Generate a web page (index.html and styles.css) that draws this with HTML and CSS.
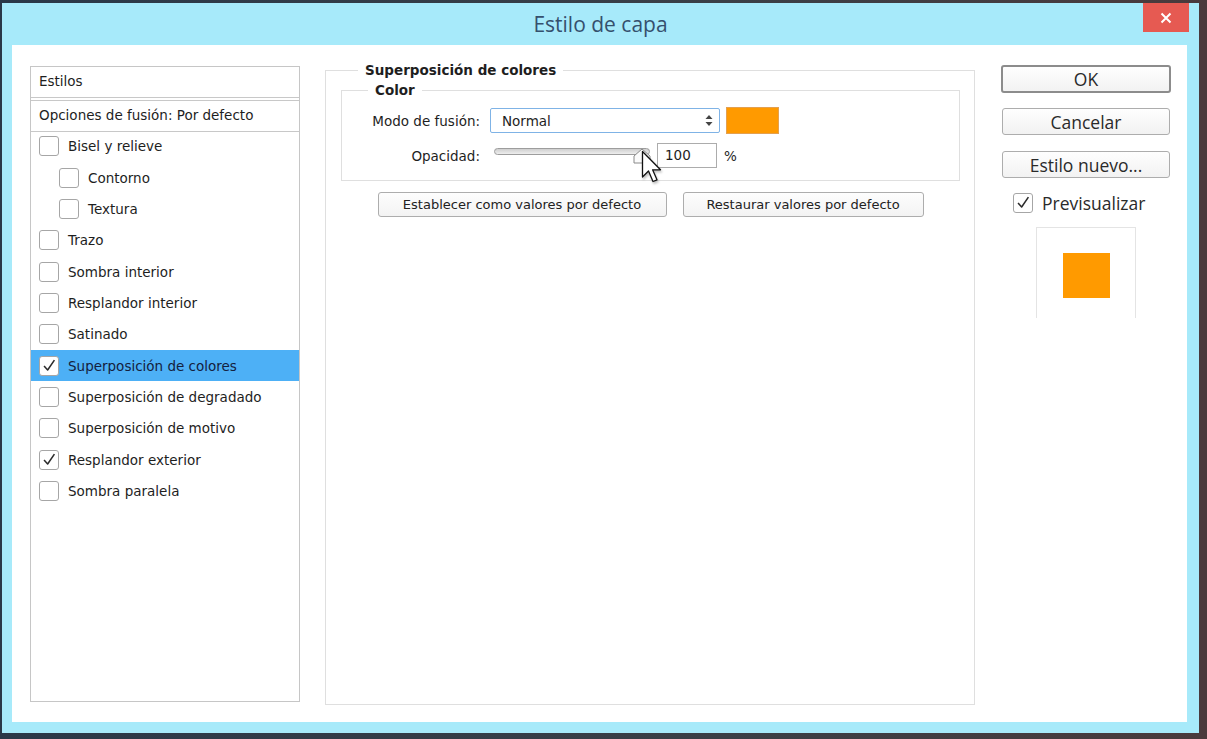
FILE: index.html
```html
<!DOCTYPE html>
<html lang="es">
<head>
<meta charset="utf-8">
<title>Estilo de capa</title>
<link rel="stylesheet" href="styles.css">
</head>
<body>
<div class="window">
  <div class="titlebar">
    <div class="tb-spacer"></div>
    <div class="title">Estilo de capa</div>
    <div class="tb-right">
      <div class="close">
        <svg width="12" height="12" viewBox="0 0 12 12"><path d="M1.5 1.5 L10.5 10.5 M10.5 1.5 L1.5 10.5" stroke="#fff" stroke-width="2" fill="none"/></svg>
      </div>
    </div>
  </div>
  <div class="client">
    <div class="styles-panel">
      <div class="panel-head">Estilos</div>
      <div class="panel-head second">Opciones de fusión: Por defecto</div>
      <ul class="fx-list">
        <li class="fx"><span class="cb"></span>Bisel y relieve</li>
        <li class="fx sub"><span class="cb"></span>Contorno</li>
        <li class="fx sub"><span class="cb"></span>Textura</li>
        <li class="fx"><span class="cb"></span>Trazo</li>
        <li class="fx"><span class="cb"></span>Sombra interior</li>
        <li class="fx"><span class="cb"></span>Resplandor interior</li>
        <li class="fx"><span class="cb"></span>Satinado</li>
        <li class="fx selected"><span class="cb"><svg viewBox="0 0 20 20"><path d="M4.5 10 L8.5 14.5 L16 3.5" /></svg></span>Superposición de colores</li>
        <li class="fx"><span class="cb"></span>Superposición de degradado</li>
        <li class="fx"><span class="cb"></span>Superposición de motivo</li>
        <li class="fx"><span class="cb"><svg viewBox="0 0 20 20"><path d="M4.5 10 L8.5 14.5 L16 3.5" /></svg></span>Resplandor exterior</li>
        <li class="fx"><span class="cb"></span>Sombra paralela</li>
      </ul>
    </div>

    <fieldset class="group outer">
      <legend>Superposición de colores</legend>
      <fieldset class="group inner">
        <legend>Color</legend>
        <div class="row r1">
          <span class="lbl">Modo de fusión:</span>
          <div class="select">
            <span>Normal</span>
            <svg class="updown" width="8" height="13" viewBox="0 0 8 13"><path d="M4 1 L7.5 5 L0.5 5 Z M4 12 L7.5 8 L0.5 8 Z" fill="#444"/></svg>
          </div>
          <div class="swatch"></div>
        </div>
        <div class="row r2">
          <span class="lbl">Opacidad:</span>
          <div class="slider">
            <div class="track"></div>
            <svg class="thumb" width="18" height="16" viewBox="0 0 18 16"><path d="M9 1 L17 8 L17 15 L1 15 L1 8 Z" fill="#fbfbfb" stroke="#8a8a8a" stroke-width="1"/></svg>
          </div>
          <div class="num">100</div>
          <span class="pct">%</span>
        </div>
      </fieldset>
      <div class="btnrow">
        <button class="btn b1">Establecer como valores por defecto</button>
        <button class="btn b2">Restaurar valores por defecto</button>
      </div>
    </fieldset>

    <div class="side">
      <button class="sbtn ok">OK</button>
      <button class="sbtn">Cancelar</button>
      <button class="sbtn">Estilo nuevo...</button>
      <div class="preview-check">
        <span class="cb"><svg viewBox="0 0 20 20"><path d="M4.5 10 L8.5 14.5 L16 3.5" /></svg></span>
        <span>Previsualizar</span>
      </div>
      <div class="preview">
        <div class="preview-square"></div>
      </div>
    </div>
  </div>
</div>
<svg class="cursor" width="22" height="36" viewBox="0 0 22 36"><path d="M1.5 1.5 L1.5 27 L7.5 21 L12 31.5 L16 29.8 L11.6 19.8 L19.5 19.8 Z" fill="#fff" stroke="#111" stroke-width="1.3" stroke-linejoin="round"/></svg>
</body>
</html>
```

FILE: styles.css
```css
* { box-sizing: border-box; }

html, body {
  margin: 0;
  padding: 0;
}

body {
  width: 1207px;
  height: 739px;
  overflow: hidden;
  position: relative;
  background: linear-gradient(90deg, #2a3848 0%, #3a3f46 60%, #4a3a3c 100%);
  font-family: "DejaVu Sans", Verdana, sans-serif;
  color: #1e1e1e;
}

.window {
  margin: 3px 0 0 2px;
  width: 1197px;
  height: 730px;
  background: #a7eafa;
  display: flex;
  flex-direction: column;
}

.titlebar {
  height: 42px;
  display: grid;
  grid-template-columns: 1fr auto 1fr;
  align-items: start;
}

.title {
  font-family: "Open Sans", "Segoe UI", sans-serif;
  font-size: 21px;
  line-height: 42px;
  color: #35506d;
}

.tb-right {
  display: flex;
  justify-content: flex-end;
}

.close {
  width: 46px;
  height: 29px;
  margin-right: 10px;
  background: #e65a52;
  display: flex;
  align-items: center;
  justify-content: center;
}

.client {
  margin: 0 12px 11px 10px;
  height: 677px;
  background: #ffffff;
  display: flex;
  align-items: flex-start;
  padding-left: 18px;
}

/* ---------- left styles list ---------- */
.styles-panel {
  margin-top: 21px;
  width: 270px;
  height: 636px;
  border: 1px solid #c6c6c6;
  font-size: 13.5px;
}

.panel-head {
  height: 31px;
  line-height: 29px;
  padding-left: 8px;
  border-bottom: 1px solid #c8c8c8;
}

.panel-head.second {
  margin-top: 2px;
  height: 32px;
  border-top: 1px solid #c8c8c8;
}

.fx-list {
  list-style: none;
  margin: -1.5px 0 0 0;
  padding: 0;
}

.fx {
  height: 31.36px;
  display: flex;
  align-items: center;
  padding-left: 8px;
}

.fx.sub { padding-left: 28px; }

.fx.selected {
  background: #4db0f6;
  color: #14213d;
}

.cb {
  width: 20px;
  height: 20px;
  flex: none;
  border: 1px solid #a6a6a6;
  border-radius: 3px;
  background: #fff;
  margin-right: 9px;
  display: flex;
}

.cb svg {
  width: 18px;
  height: 18px;
}

.cb svg path {
  fill: none;
  stroke: #2b2b2b;
  stroke-width: 1.7;
  stroke-linejoin: round;
}

/* ---------- middle group ---------- */
fieldset.group {
  min-width: 0;
  margin: 0;
  border: 1px solid #dfdfdf;
}

fieldset.group legend {
  font-weight: bold;
  font-size: 13.5px;
  line-height: 16px;
  padding: 0 7px;
}

fieldset.outer {
  margin: 17px 0 0 25px;
  width: 650px;
  height: 643px;
  padding: 0 14px 0 15px;
}

fieldset.outer > legend { margin-left: 17px; }

fieldset.inner {
  margin-top: 4px;
  padding: 0 0 12px 0;
}

fieldset.inner > legend { margin-left: 26px; }

.row {
  display: flex;
  align-items: center;
  font-size: 13.5px;
}

.row.r1 { height: 27px; margin-top: 9px; }
.row.r2 { height: 25px; margin-top: 9px; }

.lbl {
  width: 138px;
  text-align: right;
  margin-right: 10px;
  flex: none;
}

.select {
  width: 230px;
  height: 25px;
  border: 1px solid #7fb3e6;
  border-radius: 2px;
  background: #fff;
  display: flex;
  align-items: center;
  justify-content: space-between;
  padding: 0 6px 0 11px;
}

.swatch {
  width: 53px;
  height: 27px;
  margin-left: 6px;
  background: #ff9a00;
  border: 1px solid #e3a050;
}

.slider {
  position: relative;
  width: 160px;
  height: 25px;
  margin-left: 4px;
  padding-top: 5px;
}

.track {
  width: 156px;
  height: 7px;
  border: 1px solid #9d9d9d;
  border-radius: 4px;
  background: linear-gradient(#cfcfcf, #eeeeee);
}

.thumb {
  position: absolute;
  left: 139px;
  top: 5px;
}

.num {
  width: 60px;
  height: 25px;
  margin-left: 3px;
  border: 1px solid #acacac;
  background: #fff;
  padding-left: 7px;
  line-height: 23px;
}

.pct { margin-left: 7px; }

.btnrow {
  margin-top: 11px;
  display: flex;
  justify-content: center;
  gap: 16px;
}

.btn {
  height: 25px;
  border: 1px solid #adadad;
  border-radius: 3px;
  background: linear-gradient(#fdfdfd, #f3f3f3);
  font-family: "DejaVu Sans", Verdana, sans-serif;
  font-size: 13px;
  color: #222;
  padding: 0;
}

.btn.b1 { width: 289px; }
.btn.b2 { width: 241px; }

/* ---------- right column ---------- */
.side {
  margin-left: 26px;
  margin-top: 20px;
  width: 170px;
  display: flex;
  flex-direction: column;
  font-family: "Open Sans", "Segoe UI", sans-serif;
  font-size: 17.5px;
  color: #2a2a2a;
}

.sbtn {
  width: 168px;
  height: 27px;
  margin: 16px 0 0 1px;
  border: 1px solid #adadad;
  border-radius: 3px;
  background: linear-gradient(#fefefe, #f2f2f2);
  font-family: "Open Sans", "Segoe UI", sans-serif;
  font-size: 17.5px;
  color: #2a2a2a;
  padding: 0;
  line-height: 24px;
}

.sbtn.ok {
  width: 170px;
  height: 28px;
  margin: 0;
  border: 2px solid #8c8c8c;
  line-height: 23px;
}

.sbtn.ok + .sbtn { margin-top: 15px; }

.preview-check {
  margin: 15px 0 0 12px;
  display: flex;
  align-items: center;
  height: 20px;
}

.preview-check .cb { margin-right: 9px; }

.preview {
  margin: 14px 0 0 35px;
  width: 100px;
  height: 91px;
  border: 1px solid #e4e4e4;
  border-bottom: none;
  display: flex;
  align-items: center;
  justify-content: center;
  padding-top: 4px;
}

.preview-square {
  width: 47px;
  height: 45px;
  background: #ff9a00;
}

.cursor {
  position: absolute;
  left: 641px;
  top: 150px;
  filter: drop-shadow(1px 2px 1px rgba(0,0,0,0.25));
}
```
